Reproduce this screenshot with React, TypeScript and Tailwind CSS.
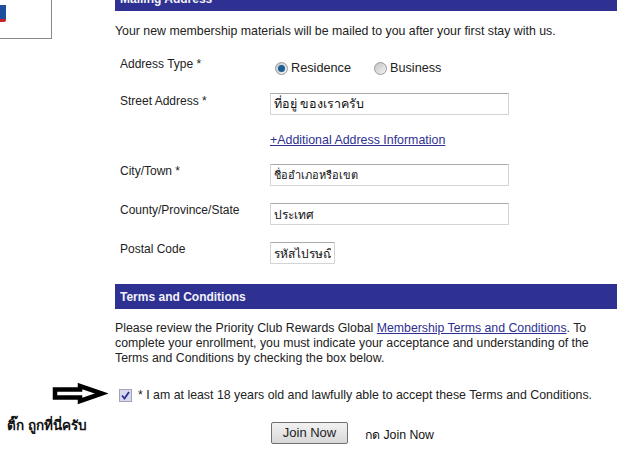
const fieldClass =
  "block h-[22px] rounded-[1px] border border-[#d4d4d4] border-t-[#aaaaaa] bg-white px-[3px] leading-[20px] text-[#111]";

const SectionHeader = ({ title, className }: { title: string; className?: string }) => (
  <div className={`flex h-[25px] items-center bg-[#2e3192] px-[5px] text-[12px] font-bold text-[#f2f2f8] ${className ?? ""}`}>
    {title}
  </div>
);

const Radio = ({ checked }: { checked?: boolean }) => (
  <span className="flex h-[13px] w-[13px] items-center justify-center rounded-full border border-[#9a9a9a] bg-gradient-to-br from-[#c4c4c4] to-[#f4f4f4]">
    {checked && <span className="h-[7px] w-[7px] rounded-full bg-[#1a5f94]" />}
  </span>
);

const Label = ({ children }: { children: string }) => <div className="w-[150px] shrink-0 text-[12px] leading-[15px]">{children}</div>;

export default function App() {
  return (
    <div className="h-[464px] w-[619px] overflow-hidden bg-white font-['Liberation_Sans',_'Noto_Sans',_sans-serif] text-[#222]">
      <div className="grid grid-cols-[115px_502px]">
        <div>
          <div className="relative h-[39px] w-[52px] overflow-hidden border-r border-b border-[#8a8a8a]">
            <div className="absolute top-[5px] left-0 h-[14px] w-[6px] bg-[#1d4f9c]" />
            <div className="absolute top-[19px] left-0 h-[3px] w-[6px] rounded-br-[2px] bg-[#c8202f]" />
          </div>
        </div>

        <div className="h-[370px]">
          <SectionHeader title="Mailing Address" className="-mt-[14px]" />
          <p className="mt-[13px] text-[12.35px] leading-[15px]">
            Your new membership materials will be mailed to you after your first stay with us.
          </p>

          <div className="mt-[18px] flex pl-[5px]">
            <Label>Address Type *</Label>
            <div className="mt-[4px] flex items-center pl-[5px] text-[12.7px] leading-[15px]">
              <Radio checked />
              <span className="ml-[3px]">Residence</span>
              <span className="ml-[23px]">
                <Radio />
              </span>
              <span className="ml-[3px]">Business</span>
            </div>
          </div>

          <div className="mt-[18px] flex pl-[5px]">
            <Label>Street Address *</Label>
            <input readOnly className={`${fieldClass} -mt-[1px] w-[239px] text-[12.5px]`} defaultValue="ที่อยู่ ของเราครับ" />
          </div>

          <a href="#" className="mt-[18px] ml-[155px] block w-fit text-[12.4px] leading-[15px] text-[#2e3192] underline">
            +Additional Address Information
          </a>

          <div className="mt-[16px] flex pl-[5px]">
            <Label>City/Town *</Label>
            <input readOnly className={`${fieldClass} w-[239px] text-[11px]`} defaultValue="ชื่ออำเภอหรือเขต" />
          </div>

          <div className="mt-[17px] flex pl-[5px]">
            <Label>County/Province/State</Label>
            <input readOnly className={`${fieldClass} w-[239px] text-[12px]`} defaultValue="ประเทศ" />
          </div>

          <div className="mt-[17px] flex pl-[5px]">
            <Label>Postal Code</Label>
            <input readOnly className={`${fieldClass} w-[65px] text-[12px]`} defaultValue="รหัสไปรษณี" />
          </div>

          <SectionHeader title="Terms and Conditions" className="mt-[20px]" />
          <p className="mt-[12px] text-[12.3px] leading-[15px]">
            Please review the Priority Club Rewards Global{" "}
            <a href="#" className="text-[#2e3192] underline">
              Membership Terms and Conditions
            </a>
            . To complete your enrollment, you must indicate your acceptance and understanding of the Terms and Conditions by checking the box below.
          </p>
        </div>

        <div className="-mt-[1px] pt-[14px]">
          <svg width="56" height="22" viewBox="0 0 56 22" className="ml-[52px]">
            <path d="M3 6.5H28V3L50 10.5L28 18V14.5H3Z" fill="#fff" stroke="#000" strokeWidth="4.5" />
          </svg>
          <div className="mt-[12px] pl-[7px] text-[13.5px] leading-[18px] font-bold text-[#111]">ติ๊ก ถูกที่นี่ครับ</div>
        </div>

        <div className="pt-[18px]">
          <div className="flex items-center pl-[4px] text-[12.35px] leading-[15px]">
            <span className="flex h-[13px] w-[13px] items-center justify-center border border-[#a3a3b3] bg-[#d6d9f0]">
              <svg width="9" height="9" viewBox="0 0 9 9">
                <path d="M1 4.5L3.5 7.5L8 1" fill="none" stroke="#2e3192" strokeWidth="1.8" />
              </svg>
            </span>
            <span className="ml-[6px]">* I am at least 18 years old and lawfully able to accept these Terms and Conditions.</span>
          </div>
          <div className="mt-[18px] flex items-center pl-[156px]">
            <button className="h-[22px] w-[77px] rounded-[2px] border border-[#707070] bg-gradient-to-b from-[#f2f2f2] to-[#d8d8d8] text-[13px] leading-[18px] text-[#222]">
              Join Now
            </button>
            <span className="mt-[5px] ml-[17px] text-[12.3px] text-[#111]">กด Join Now</span>
          </div>
        </div>
      </div>
    </div>
  );
}
